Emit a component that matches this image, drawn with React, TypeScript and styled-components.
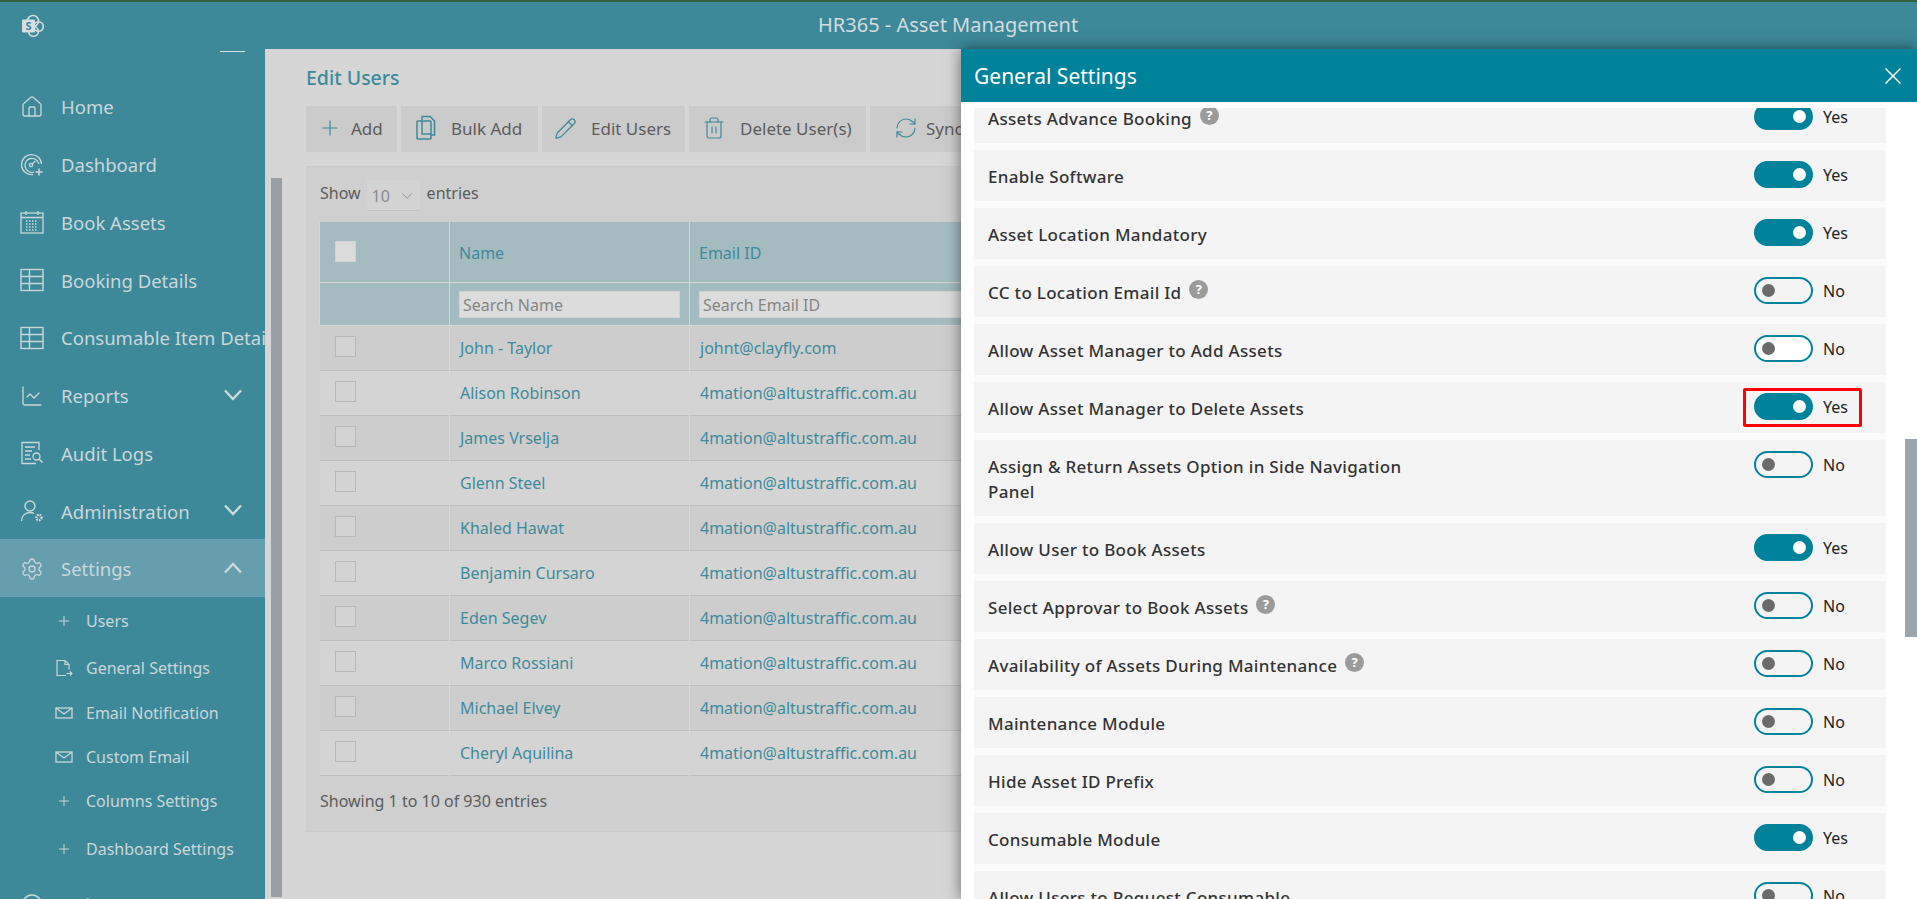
import React from 'react';
import styled, { createGlobalStyle } from 'styled-components';
import { ChartLine, ChevronDown, CircleHelp, House, Pencil, Plus, RefreshCw, Settings, Trash2 } from 'lucide-react';

const GlobalStyle = createGlobalStyle`
  html, body {
    margin: 0;
    padding: 0;
    height: 100%;
    overflow: hidden;
    background: #d6d6d6;
  }
  * {
    box-sizing: border-box;
  }
  body {
    font-family: "Noto Sans", "Open Sans", sans-serif;
  }
`;

const Page = styled.div`
  width: 1917px;
  height: 899px;
  overflow: hidden;
  display: flex;
  flex-direction: column;
  position: relative;
`;

const TopLine = styled.div`
  height: 2px;
  background: #2f5f38;
`;

const Header = styled.header`
  height: 47px;
  background: #3d8999;
  display: flex;
  align-items: center;
  padding-left: 21px;
  position: relative;
`;

const HeaderTitle = styled.div`
  position: absolute;
  left: 818px;
  top: 10px;
  font-size: 20px;
  line-height: 26px;
  color: #d3dcde;
  white-space: nowrap;
`;

const Body = styled.div`
  flex: 1;
  display: flex;
  min-height: 0;
`;

const Sidebar = styled.nav`
  width: 265px;
  flex: none;
  background: #3d8999;
  overflow: hidden;
  color: #c9d7da;
  position: relative;
  padding-top: 28px;
`;

const MenuDash = styled.div`
  position: absolute;
  left: 220px;
  top: 2px;
  width: 25px;
  height: 1px;
  background: #d5e3e6;
`;

const MenuItem = styled.div<{ $active?: boolean }>`
  height: 57.75px;
  display: flex;
  align-items: center;
  padding-left: 20px;
  padding-top: 2px;
  background: ${(p) => (p.$active ? '#659fae' : 'transparent')};
  font-size: 18.5px;
  white-space: nowrap;
  position: relative;
`;

const MenuIcon = styled.span`
  width: 24px;
  height: 24px;
  flex: none;
  margin-right: 17px;
  display: flex;
  align-items: center;
  justify-content: center;
  color: #c9d7da;
`;

const Caret = styled.svg<{ $up?: boolean }>`
  position: absolute;
  left: 224px;
  top: 23px;
  transform: ${(p) => (p.$up ? 'rotate(180deg)' : 'none')};
`;

const SubItem = styled.div<{ $h: number }>`
  height: ${(p) => p.$h}px;
  display: flex;
  align-items: center;
  padding-left: 55px;
  font-size: 16px;
  white-space: nowrap;
`;

const SubIcon = styled.span`
  width: 18px;
  height: 18px;
  flex: none;
  margin-right: 13px;
  display: flex;
  align-items: center;
  justify-content: center;
`;

const Main = styled.main`
  flex: 1;
  background: #d6d6d6;
  padding: 16px 0 0 41px;
  position: relative;
  overflow: hidden;
`;

const MainScroll = styled.div`
  position: absolute;
  left: 6px;
  top: 129px;
  width: 11px;
  height: 719px;
  background: #9a9fa5;
`;

const PageTitle = styled.h1`
  margin: 0;
  font-size: 19.5px;
  line-height: 26px;
  font-weight: 500;
  color: #3d8a9a;
`;

const Toolbar = styled.div`
  display: flex;
  gap: 4px;
  margin-top: 15px;
`;

const ToolButton = styled.div<{ $w: number; $pad: number; $gap: number }>`
  width: ${(p) => p.$w}px;
  height: 46px;
  flex: none;
  background: #cbcbcb;
  display: flex;
  align-items: center;
  gap: ${(p) => p.$gap}px;
  padding: 0 0 2px ${(p) => p.$pad}px;
  font-size: 17px;
  color: #5c5c5c;
  white-space: nowrap;
  overflow: hidden;
  svg {
    color: #3d8a9a;
    flex: none;
  }
`;

const Card = styled.section`
  margin-top: 14px;
  width: 1590px;
  height: 666px;
  background: #cfcfcf;
  border: 1px solid #cbcbcb;
  padding: 13px 13px 0 13px;
`;

const LengthRow = styled.div`
  height: 31px;
  display: flex;
  align-items: center;
  font-size: 16px;
  color: #5c5c5c;
  padding-bottom: 5px;
`;

const LengthSelect = styled.div`
  width: 53px;
  height: 31px;
  margin: 0 7px -5px 6px;
  background: #d3d3d3;
  border-bottom: 1px solid #c2c2c2;
  padding: 2px 0 0 5px;
  display: flex;
  align-items: center;
  gap: 8px;
  color: #8b8b8b;
  font-size: 16px;
`;

const Table = styled.table`
  width: 1560px;
  margin: 11px 0 0 -1px;
  border-collapse: collapse;
  table-layout: fixed;
  font-size: 16px;
  color: #3f8a9b;
`;

const HeadCell = styled.th`
  height: 60px;
  background: #a4bbc0;
  border: 1px solid #d6d6d6;
  border-top: 0;
  padding: 3px 0 0 9px;
  text-align: left;
  font-weight: 400;
`;

const CheckHeadCell = styled(HeadCell)`
  padding: 0 0 0 15px;
`;

const FilterCell = styled.th`
  height: 43px;
  background: #a4bbc0;
  border: 1px solid #d6d6d6;
  padding: 0 9px;
  font-weight: 400;
`;

const SearchInput = styled.input`
  display: block;
  width: 100%;
  height: 27px;
  margin-top: 2px;
  background: #dcdcdc;
  border: 1px solid #d2d2d2;
  padding: 0 3px;
  font-family: inherit;
  font-size: 16px;
  &::placeholder {
    color: #858585;
    opacity: 1;
  }
`;

const BodyRow = styled.tr<{ $odd: boolean }>`
  background: ${(p) => (p.$odd ? '#cdcdcd' : '#d4d4d4')};
  border-bottom: 1px solid #bdbdbd;
`;

const Cell = styled.td`
  height: 45px;
  padding: 1px 0 0 10px;
  border-right: 1px solid #d6d6d6;
  white-space: nowrap;
`;

const CheckCell = styled(Cell)`
  padding: 0 0 0 15px;
`;

const CheckBox = styled.div<{ $head?: boolean }>`
  width: 21px;
  height: 21px;
  margin-top: ${(p) => (p.$head ? '0' : '-2px')};
  background: ${(p) => (p.$head ? '#dbdbdb' : '#d3d3d3')};
  border: 1px solid ${(p) => (p.$head ? '#d2d2d2' : '#b8b8b8')};
`;

const TableInfo = styled.div`
  margin-top: 14px;
  font-size: 16px;
  line-height: 22px;
  color: #5c5c5c;
`;

const Panel = styled.aside`
  position: absolute;
  left: 961px;
  top: 49px;
  right: 0;
  bottom: 0;
  background: #fff;
  box-shadow: 0 0 14px rgba(0, 0, 0, 0.5);
  display: flex;
  flex-direction: column;
`;

const PanelHeader = styled.div`
  height: 53px;
  flex: none;
  background: #00829b;
  color: #fff;
  display: flex;
  align-items: center;
  justify-content: space-between;
  padding: 0 16px 0 13px;
  font-size: 21px;
`;

const PanelBody = styled.div`
  flex: 1;
  margin-top: 6px;
  overflow: hidden;
  position: relative;
`;

const SettingsList = styled.div`
  width: 912px;
  margin: -16px 0 0 13px;
  background: #fbfbfb;
  display: flex;
  flex-direction: column;
  gap: 7px;
`;

const SettingRow = styled.div`
  background: #f4f4f4;
  display: grid;
  grid-template-columns: 766px auto;
  padding: 14px 0 12px 14px;
  flex: none;
`;

const SettingLabel = styled.div`
  max-width: 430px;
  font-size: 17px;
  line-height: 25px;
  font-weight: 500;
  letter-spacing: 0.3px;
  color: #333;
`;

const HelpBadge = styled.span`
  display: inline-block;
  width: 19px;
  height: 19px;
  margin-left: 8px;
  border-radius: 50%;
  background: #9b9b9b;
  color: #fff;
  font-size: 13px;
  line-height: 18px;
  font-weight: 700;
  letter-spacing: 0;
  text-align: center;
  vertical-align: 5px;
`;

const ToggleGroup = styled.div`
  display: flex;
  align-items: flex-start;
  gap: 10px;
  margin-top: -3px;
  position: relative;
  width: 96px;
`;

const Track = styled.div<{ $on: boolean; $hover?: boolean }>`
  width: 59px;
  height: 27px;
  flex: none;
  border-radius: 14px;
  border: 2px solid #00829b;
  background: ${(p) => (p.$on ? '#00829b' : p.$hover ? '#fff' : 'transparent')};
  position: relative;
`;

const Knob = styled.span<{ $on: boolean }>`
  position: absolute;
  top: 50%;
  width: 13px;
  height: 13px;
  margin-top: -6.5px;
  border-radius: 50%;
  background: ${(p) => (p.$on ? '#fff' : '#6b6b6b')};
  left: ${(p) => (p.$on ? '37px' : '6px')};
`;

const ToggleText = styled.span`
  margin-top: 2px;
  font-size: 16px;
  line-height: 24px;
  color: #222;
`;

const Highlight = styled.div`
  position: absolute;
  left: -11px;
  top: -5px;
  width: 119px;
  height: 39px;
  border: 3px solid #f00;
  border-radius: 2px;
`;

const PanelScroll = styled.div`
  position: absolute;
  left: 944px;
  top: 331px;
  width: 12px;
  height: 198px;
  background: #9aa5ad;
`;

const SharePointLogo = () => (
  <svg width="24" height="24" viewBox="0 0 24 24">
    <circle cx="12" cy="7" r="5.5" fill="none" stroke="#d5dfe1" strokeWidth="1.6" />
    <circle cx="17.5" cy="12.5" r="4.8" fill="none" stroke="#d5dfe1" strokeWidth="1.6" />
    <circle cx="12.5" cy="17.5" r="4.8" fill="none" stroke="#d5dfe1" strokeWidth="1.6" />
    <rect x="1" y="5.5" width="13" height="13" rx="1" fill="#d5dfe1" />
    <text x="7.5" y="16" textAnchor="middle" fontSize="11" fontWeight="700" fill="#3d8999" fontFamily="Noto Sans, sans-serif">S</text>
  </svg>
);

const CaretIcon = ({ up }: { up?: boolean }) => (
  <Caret $up={up} width="18" height="12" viewBox="0 0 18 12" fill="none" stroke="#cdd9dc" strokeWidth="2.4">
    <path d="M1 1.5l8 8.5 8-8.5" />
  </Caret>
);

const GaugeIcon = () => (
  <svg width="24" height="24" viewBox="0 0 24 24" fill="none" stroke="currentColor" strokeWidth="1.3">
    <path d="M13 21.5A10 10 0 1 1 21.5 11" />
    <path d="M14 19A7 7 0 1 1 18.8 11" />
    <circle cx="11" cy="12" r="1.6" />
    <path d="M12 11l3.5-3" />
    <path d="M19 15.5v7M15.5 19h7" strokeWidth="1.5" />
  </svg>
);

const CalendarIcon = () => (
  <svg width="24" height="24" viewBox="0 0 24 24" fill="none" stroke="currentColor" strokeWidth="1.3">
    <rect x="1" y="3" width="22" height="20" />
    <path d="M1 7.5h22M6 1v4M18 1v4" />
    <path d="M6 11h12M6 14h12M6 17h12M6 20h12" strokeDasharray="1.5 1.5" strokeWidth="1.4" />
  </svg>
);

const GridIcon = () => (
  <svg width="24" height="24" viewBox="0 0 24 24" fill="none" stroke="currentColor" strokeWidth="1.4">
    <rect x="1" y="1.5" width="22" height="21" />
    <path d="M1 8.5h22M1 15.5h22M9.5 1.5v21" />
  </svg>
);

const AuditIcon = () => (
  <svg width="24" height="24" viewBox="0 0 24 24" fill="none" stroke="currentColor" strokeWidth="1.3">
    <path d="M19 9V1.5H2v21h14" />
    <path d="M5 6h10M5 10h7M5 14h5M5 18h6" />
    <circle cx="16.5" cy="15.5" r="3.5" />
    <path d="M19 18l3.5 3.5" strokeWidth="1.6" />
  </svg>
);

const AdminIcon = () => (
  <svg width="24" height="24" viewBox="0 0 24 24" fill="none" stroke="currentColor" strokeWidth="1.4">
    <circle cx="10" cy="7" r="5" />
    <path d="M1.5 22c0-5 3.5-8.5 8.5-8.5 1.5 0 2.8.3 4 1" />
    <circle cx="19" cy="18.5" r="2.6" strokeWidth="2.4" strokeDasharray="1.6 0.9" />
  </svg>
);

const SheetIcon = () => (
  <svg width="18" height="18" viewBox="0 0 18 18" fill="none" stroke="currentColor" strokeWidth="1.2">
    <path d="M11 16.5H2V1.5h8l4 4v5" />
    <path d="M10 1.5v4h4M11.5 14.5h5.5M15 12.5l2 2-2 2" />
  </svg>
);

const MailIcon = () => (
  <svg width="18" height="14" viewBox="0 0 18 14" fill="none" stroke="currentColor" strokeWidth="1.3">
    <rect x="1" y="2" width="16" height="10" />
    <path d="M1 2l8 6 8-6" />
  </svg>
);

const CopyIcon = () => (
  <svg width="20" height="26" viewBox="0 0 20 26" fill="none" stroke="currentColor" strokeWidth="1.5">
    <path d="M6 5V1.5h8l4.5 4.5v14H15" />
    <rect x="1" y="6" width="14" height="18" rx="1" />
    <path d="M6 6v13h9" />
  </svg>
);

type Setting = { label: string; on: boolean; help?: boolean; hover?: boolean; marked?: boolean };

const settings: Setting[] = [
  { label: 'Assets Advance Booking', on: true, help: true },
  { label: 'Enable Software', on: true },
  { label: 'Asset Location Mandatory', on: true },
  { label: 'CC to Location Email Id', on: false, help: true },
  { label: 'Allow Asset Manager to Add Assets', on: false, hover: true },
  { label: 'Allow Asset Manager to Delete Assets', on: true, marked: true },
  { label: 'Assign & Return Assets Option in Side Navigation Panel', on: false },
  { label: 'Allow User to Book Assets', on: true },
  { label: 'Select Approvar to Book Assets', on: false, help: true },
  { label: 'Availability of Assets During Maintenance', on: false, help: true },
  { label: 'Maintenance Module', on: false },
  { label: 'Hide Asset ID Prefix', on: false },
  { label: 'Consumable Module', on: true },
  { label: 'Allow Users to Request Consumable', on: false },
];

const users = [
  ['John - Taylor', 'johnt@clayfly.com'],
  ['Alison Robinson', '4mation@altustraffic.com.au'],
  ['James Vrselja', '4mation@altustraffic.com.au'],
  ['Glenn Steel', '4mation@altustraffic.com.au'],
  ['Khaled Hawat', '4mation@altustraffic.com.au'],
  ['Benjamin Cursaro', '4mation@altustraffic.com.au'],
  ['Eden Segev', '4mation@altustraffic.com.au'],
  ['Marco Rossiani', '4mation@altustraffic.com.au'],
  ['Michael Elvey', '4mation@altustraffic.com.au'],
  ['Cheryl Aquilina', '4mation@altustraffic.com.au'],
];

const thin = { size: 24, strokeWidth: 1.3 };

const App = () => {
  return (
    <Page>
      <GlobalStyle />
      <TopLine />
      <Header>
        <SharePointLogo />
        <HeaderTitle>HR365 - Asset Management</HeaderTitle>
      </Header>
      <Body>
        <Sidebar>
          <MenuDash />
          <MenuItem><MenuIcon><House {...thin} /></MenuIcon>Home</MenuItem>
          <MenuItem><MenuIcon><GaugeIcon /></MenuIcon>Dashboard</MenuItem>
          <MenuItem><MenuIcon><CalendarIcon /></MenuIcon>Book Assets</MenuItem>
          <MenuItem><MenuIcon><GridIcon /></MenuIcon>Booking Details</MenuItem>
          <MenuItem><MenuIcon><GridIcon /></MenuIcon>Consumable Item Details</MenuItem>
          <MenuItem>
            <MenuIcon><ChartLine {...thin} /></MenuIcon>Reports
            <CaretIcon />
          </MenuItem>
          <MenuItem><MenuIcon><AuditIcon /></MenuIcon>Audit Logs</MenuItem>
          <MenuItem>
            <MenuIcon><AdminIcon /></MenuIcon>Administration
            <CaretIcon />
          </MenuItem>
          <MenuItem $active>
            <MenuIcon><Settings {...thin} /></MenuIcon>Settings
            <CaretIcon up />
          </MenuItem>
          <SubItem $h={48}><SubIcon><Plus size={16} strokeWidth={1.5} /></SubIcon>Users</SubItem>
          <SubItem $h={46}><SubIcon><SheetIcon /></SubIcon>General Settings</SubItem>
          <SubItem $h={44}><SubIcon><MailIcon /></SubIcon>Email Notification</SubItem>
          <SubItem $h={44}><SubIcon><MailIcon /></SubIcon>Custom Email</SubItem>
          <SubItem $h={44}><SubIcon><Plus size={16} strokeWidth={1.5} /></SubIcon>Columns Settings</SubItem>
          <SubItem $h={52}><SubIcon><Plus size={16} strokeWidth={1.5} /></SubIcon>Dashboard Settings</SubItem>
          <MenuItem><MenuIcon><CircleHelp {...thin} /></MenuIcon>Help</MenuItem>
        </Sidebar>
        <Main>
          <MainScroll />
          <PageTitle>Edit Users</PageTitle>
          <Toolbar>
            <ToolButton $w={91} $pad={12} $gap={9}><Plus size={24} strokeWidth={1.2} />Add</ToolButton>
            <ToolButton $w={137} $pad={15} $gap={15}><CopyIcon />Bulk Add</ToolButton>
            <ToolButton $w={143} $pad={12} $gap={14}><Pencil size={23} strokeWidth={1.3} />Edit Users</ToolButton>
            <ToolButton $w={177} $pad={13} $gap={14}><Trash2 size={24} strokeWidth={1.2} />Delete User(s)</ToolButton>
            <ToolButton $w={150} $pad={24} $gap={8}><RefreshCw size={24} strokeWidth={1.2} />Sync Users</ToolButton>
          </Toolbar>
          <Card>
            <LengthRow>
              Show
              <LengthSelect>10<ChevronDown size={18} strokeWidth={1.2} /></LengthSelect>
              entries
            </LengthRow>
            <Table>
              <colgroup>
                <col width="130" />
                <col width="240" />
                <col />
              </colgroup>
              <thead>
                <tr>
                  <CheckHeadCell><CheckBox $head /></CheckHeadCell>
                  <HeadCell>Name</HeadCell>
                  <HeadCell>Email ID</HeadCell>
                </tr>
                <tr>
                  <FilterCell />
                  <FilterCell><SearchInput placeholder="Search Name" readOnly /></FilterCell>
                  <FilterCell><SearchInput placeholder="Search Email ID" readOnly /></FilterCell>
                </tr>
              </thead>
              <tbody>
                {users.map(([name, email], i) => (
                  <BodyRow key={name} $odd={i % 2 === 0}>
                    <CheckCell><CheckBox /></CheckCell>
                    <Cell>{name}</Cell>
                    <Cell>{email}</Cell>
                  </BodyRow>
                ))}
              </tbody>
            </Table>
            <TableInfo>Showing 1 to 10 of 930 entries</TableInfo>
          </Card>
        </Main>
      </Body>
      <Panel>
        <PanelHeader>
          General Settings
          <svg width="16" height="16" viewBox="0 0 16 16" stroke="#fff" strokeWidth="1.5">
            <path d="M0.5 0.5l15 15M15.5 0.5l-15 15" />
          </svg>
        </PanelHeader>
        <PanelBody>
          <SettingsList>
            {settings.map((s) => (
              <SettingRow key={s.label}>
                <SettingLabel>
                  {s.label}
                  {s.help && <HelpBadge>?</HelpBadge>}
                </SettingLabel>
                <ToggleGroup>
                  {s.marked && <Highlight />}
                  <Track $on={s.on} $hover={s.hover}><Knob $on={s.on} /></Track>
                  <ToggleText>{s.on ? 'Yes' : 'No'}</ToggleText>
                </ToggleGroup>
              </SettingRow>
            ))}
          </SettingsList>
          <PanelScroll />
        </PanelBody>
      </Panel>
    </Page>
  );
};

export default App;
